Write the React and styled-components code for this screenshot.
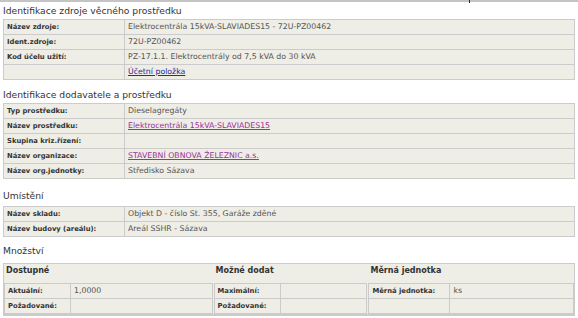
import styled, { createGlobalStyle } from "styled-components";

const GlobalStyle = createGlobalStyle`
  body {
    margin: 0;
    background: #fff;
    font-family: "DejaVu Sans", Verdana, sans-serif;
  }
`;

const Page = styled.div`
  width: 578px;
  height: 318px;
  overflow: hidden;
  padding: 0 3px;
  box-sizing: border-box;
`;

const TopBar = styled.div`
  height: 2px;
  margin: 0 -3px;
  background: #c4c4c4;
  position: relative;

  &::after {
    content: "";
    position: absolute;
    left: 469px;
    top: 0;
    width: 1px;
    height: 3px;
    background: #1a2a6c;
  }
`;

const SectionTitle = styled.h2`
  font-size: 9.2px;
  font-weight: normal;
  color: #333;
  margin: ${(p) => p.$top}px 0 ${(p) => p.$bottom}px 0;
  line-height: 11px;
`;

const DataTable = styled.table`
  width: 100%;
  border-collapse: separate;
  border-spacing: 1px;
  background: #cbcbcb;
`;

const Label = styled.td`
  width: ${(p) => p.$w || 114}px;
  height: 14px;
  line-height: 14px;
  padding: 0 3px;
  background: #eeede6;
  color: #333;
  font-size: 6.8px;
  font-weight: bold;
  white-space: nowrap;
`;

const Value = styled.td`
  height: 14px;
  line-height: 14px;
  padding: 0 3px;
  background: #eeede6;
  color: #555;
  font-size: 7.8px;
  white-space: nowrap;
`;

const Link = styled.a`
  color: ${(p) => (p.$visited ? "#993399" : "#2a2a9c")};
  text-decoration: underline;
`;

const QtyTable = styled.table`
  width: 100%;
  border-collapse: separate;
  border-spacing: 0;
  background: #eeede6;
  border: 1px solid #cbcbcb;
  border-bottom-width: 2px;
`;

const QtyHead = styled.th`
  height: 19px;
  padding: 2px 2px 0;
  text-align: left;
  vertical-align: top;
  font-size: 8px;
  line-height: 10px;
  font-weight: bold;
  color: #333;
  width: ${(p) => p.$w}px;
  box-sizing: border-box;
`;

const QtyCell = styled.td`
  padding: 0 ${(p) => p.$pr || 0}px 0 0;
  vertical-align: top;
`;

const sections = [
  {
    title: "Identifikace zdroje věcného prostředku",
    top: 3,
    bottom: 3,
    rows: [
      ["Název zdroje:", "Elektrocentrála 15kVA-SLAVIADES15 - 72U-PZ00462"],
      ["Ident.zdroje:", "72U-PZ00462"],
      ["Kod účelu užití:", "PZ-17.1.1.  Elektrocentrály od 7,5 kVA do 30 kVA"],
      ["", <Link href="#" $visited={false}>Účetní položka</Link>],
    ],
  },
  {
    title: "Identifikace dodavatele a prostředku",
    top: 9,
    bottom: 3,
    rows: [
      ["Typ prostředku:", "Dieselagregáty"],
      ["Název prostředku:", <Link href="#" $visited>Elektrocentrála 15kVA-SLAVIADES15</Link>],
      ["Skupina kriz.řízení:", ""],
      ["Název organizace:", <Link href="#" $visited>STAVEBNÍ OBNOVA ŽELEZNIC a.s.</Link>],
      ["Název org.jednotky:", "Středisko Sázava"],
    ],
  },
  {
    title: "Umístění",
    top: 11,
    bottom: 5,
    rows: [
      ["Název skladu:", "Objekt D - číslo St. 355, Garáže zděné"],
      ["Název budovy (areálu):", "Areál SSHR - Sázava"],
    ],
  },
];

const InfoTable = ({ rows }) => (
  <DataTable>
    <tbody>
      {rows.map(([label, value], i) => (
        <tr key={i}>
          <Label>{label}</Label>
          <Value>{value}</Value>
        </tr>
      ))}
    </tbody>
  </DataTable>
);

const qtyGroups = [
  { title: "Dostupné", w: 211, lw: 59, rows: [["Aktuální:", "1,0000"], ["Požadované:", ""]] },
  { title: "Možné dodat", w: 156, lw: 59, rows: [["Maximální:", ""], ["Požadované:", ""]] },
  { title: "Měrná jednotka", w: 207, lw: 74, rows: [["Měrná jednotka:", "ks"], ["", ""]] },
];

const App = () => (
  <>
    <GlobalStyle />
    <Page>
      <TopBar />
      {sections.map((s) => (
        <div key={s.title}>
          <SectionTitle $top={s.top} $bottom={s.bottom}>
            {s.title}
          </SectionTitle>
          <InfoTable rows={s.rows} />
        </div>
      ))}
      <SectionTitle $top={8} $bottom={7}>
        Množství
      </SectionTitle>
      <QtyTable>
        <tbody>
          <tr>
            {qtyGroups.map((g) => (
              <QtyHead key={g.title} $w={g.w}>
                {g.title}
              </QtyHead>
            ))}
          </tr>
          <tr>
            {qtyGroups.map((g, i) => (
              <QtyCell key={g.title} $pr={i < 2 ? 1 : 0}>
                <DataTable>
                  <tbody>
                    {g.rows.map(([label, value], j) => (
                      <tr key={j}>
                        <Label $w={g.lw}>{label}</Label>
                        <Value>{value}</Value>
                      </tr>
                    ))}
                  </tbody>
                </DataTable>
              </QtyCell>
            ))}
          </tr>
        </tbody>
      </QtyTable>
    </Page>
  </>
);

export default App;
